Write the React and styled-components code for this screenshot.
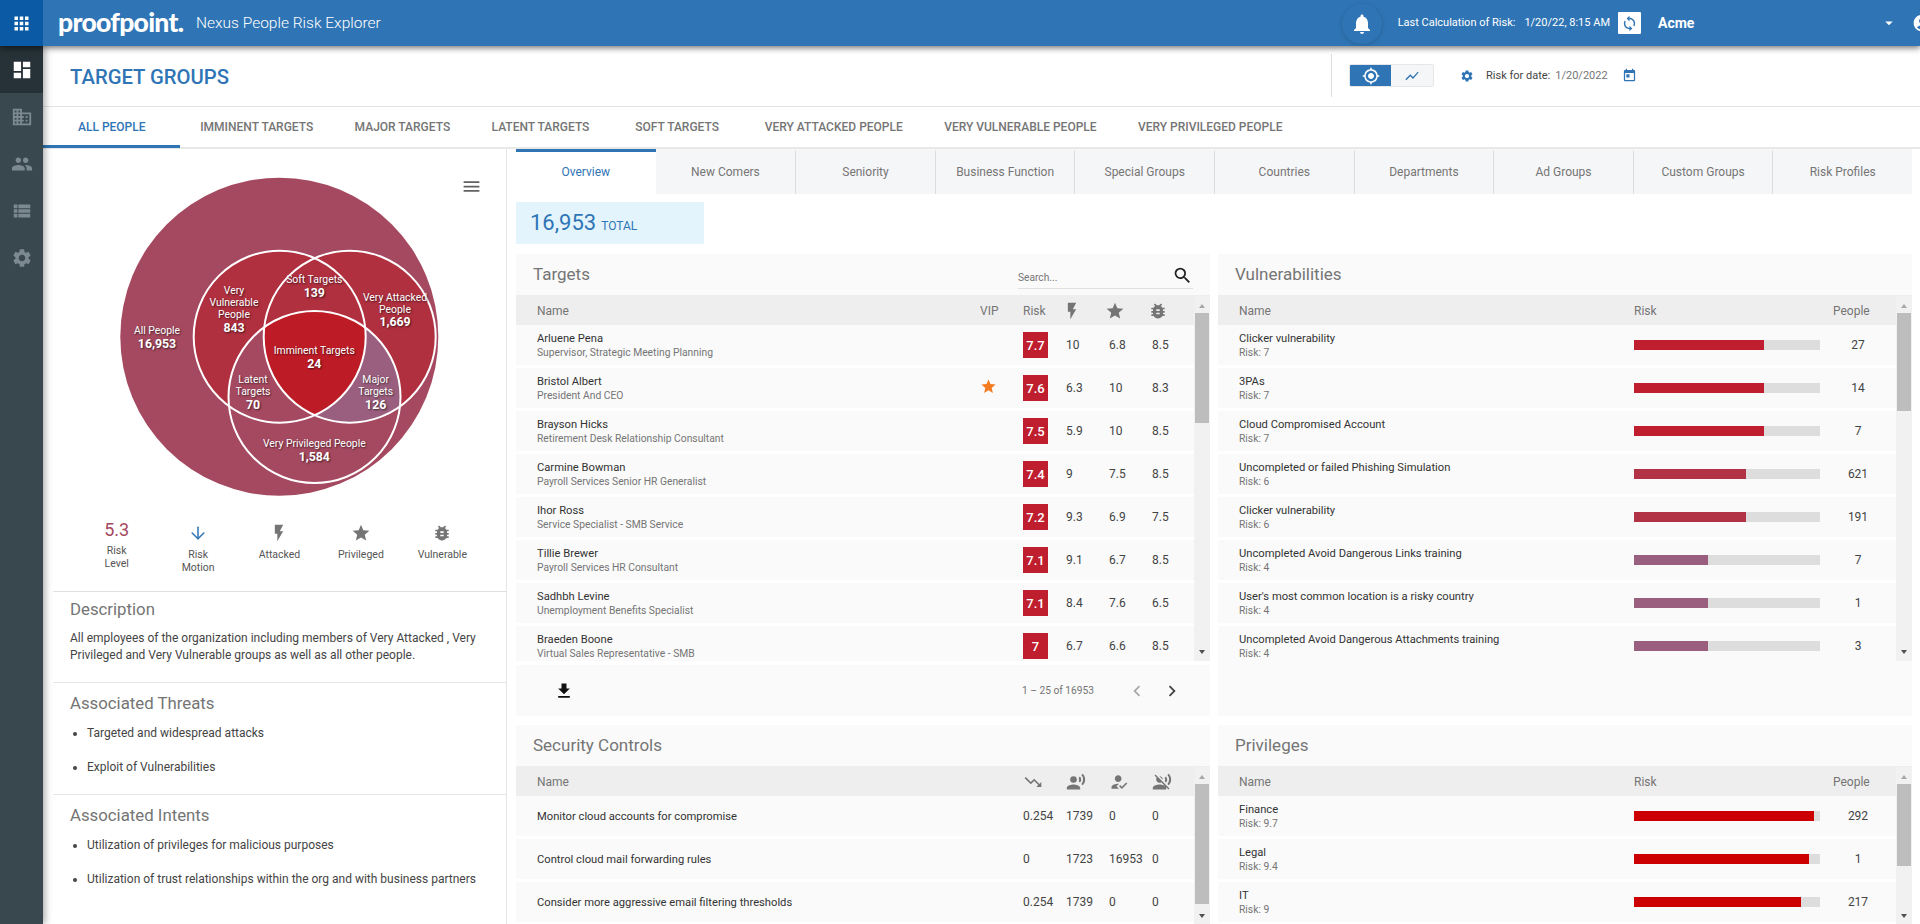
import React from "react";
import styled, { createGlobalStyle } from "styled-components";
import {
  MdApps, MdDashboard, MdDomain, MdPeople, MdViewList, MdSettings, MdNotifications,
  MdArrowDropDown, MdAccountCircle, MdStar, MdBugReport, MdFlashOn, MdFileDownload,
  MdChevronLeft, MdChevronRight, MdSearch, MdMenu, MdToday, MdGpsFixed, MdShowChart,
  MdSync, MdTrendingDown, MdRecordVoiceOver, MdHowToReg, MdVoiceOverOff,
} from "react-icons/md";
import { ArrowDown } from "lucide-react";

const BLUE = "#2f75b5";
const GREY = "#757575";

const Global = createGlobalStyle`
  html, body { margin: 0; height: 100%; overflow: hidden; background: #fff; }
  body { font-family: Roboto, "Liberation Sans", sans-serif; color: #333; }
  * { box-sizing: border-box; }
`;

const Page = styled.div`
  width: 1920px; height: 924px; display: flex; flex-direction: column; overflow: hidden;
`;
const TopBar = styled.header`
  height: 46px; flex: none; display: flex; align-items: center; background: ${BLUE};
  color: #fff; position: relative; z-index: 3; box-shadow: 0 2px 6px rgba(0,0,0,.55); overflow: hidden;
`;
const AppTile = styled.div`
  width: 43px; height: 46px; background: #0a5aa5; display: flex; align-items: center; justify-content: center;
  font-size: 21px; flex: none;
`;
const Logo = styled.div`
  margin-left: 15px; width: 125px; font-family: Lato, sans-serif; font-weight: 900; font-size: 26.5px;
  letter-spacing: -0.7px; line-height: 46px; margin-top: -3px; white-space: nowrap;
`;
const Product = styled.div`
  margin-left: 13px; font-size: 15.5px; font-weight: 300; white-space: nowrap; flex: 1;
`;
const BellWrap = styled.div`
  width: 40px; height: 40px; border-radius: 50%; display: flex; align-items: center; justify-content: center;
  font-size: 24px; box-shadow: 0 1px 5px rgba(0,0,0,.18); margin-top: 2px;
`;
const CalcLabel = styled.span`
  margin-left: 16px; font-size: 11px; white-space: nowrap; margin-top: -2px;
`;
const CalcValue = styled.span`
  margin-left: 9px; font-size: 11px; white-space: nowrap; margin-top: -2px;
`;
const RefreshBtn = styled.button`
  margin-left: 8px; width: 23px; height: 22px; padding: 0; border: 0; border-radius: 1px; background: #fff;
  color: ${BLUE}; display: flex; align-items: center; justify-content: center; font-size: 17px;
`;
const Account = styled.div`
  margin-left: 17px; width: 222px; font-size: 14px; font-weight: 700;
`;
const Caret = styled.div`
  width: 18px; display: flex; font-size: 18px; justify-content: center;
`;
const Avatar = styled.div`
  margin-left: 14px; width: 8px; overflow: hidden; display: flex; font-size: 20px; flex: none;
  svg { flex: none; }
`;

const Body = styled.div`
  flex: 1; display: flex; min-height: 0;
`;
const Rail = styled.nav`
  width: 43px; flex: none; background: #39474f; position: relative; z-index: 2;
  box-shadow: 2px 0 7px rgba(0,0,0,.35);
`;
const RailItem = styled.div`
  height: 47px; display: flex; align-items: center; justify-content: center; font-size: 22px;
  background: ${(p) => (p.$active ? "#263238" : "transparent")};
  color: ${(p) => (p.$active ? "#fff" : "#7d8990")};
`;
const Main = styled.main`
  flex: 1; min-width: 0; display: flex; flex-direction: column;
`;
const PageHead = styled.div`
  height: 61px; flex: none; display: grid; grid-template-columns: 1288px 1fr; align-items: center;
  border-bottom: 1px solid #e3e3e3; padding-bottom: 1px;
`;
const PageTitle = styled.h1`
  margin: 3px 0 0 27px; font-size: 20.3px; font-weight: 500; color: ${BLUE}; line-height: 1;
`;
const Tools = styled.div`
  height: 43px; border-left: 1px solid #ddd; padding-left: 17px; display: flex; align-items: center;
`;
const Toggle = styled.div`
  display: flex; width: 85px; height: 23px; border: 1px solid #e4e6e9; border-radius: 2px; overflow: hidden;
`;
const ToggleBtn = styled.div`
  flex: ${(p) => (p.$active ? "0 0 41px" : "1")}; display: flex; align-items: center; justify-content: center;
  background: ${(p) => (p.$active ? BLUE : "#f5f6f8")}; color: ${(p) => (p.$active ? "#fff" : BLUE)};
  font-size: ${(p) => (p.$active ? "18px" : "16px")};
`;
const ToolGear = styled.span`
  margin-left: 26px; display: flex; color: ${BLUE}; font-size: 14px;
`;
const DateLabel = styled.span`
  margin-left: 12px; font-size: 11px; color: #444;
`;
const DateValue = styled.span`
  margin-left: 5px; font-size: 11px; color: ${GREY};
`;
const DateIcon = styled.span`
  margin-left: 14px; display: flex; color: ${BLUE}; font-size: 15px;
`;
const TabsBar = styled.div`
  height: 42px; flex: none; display: flex; border-bottom: 2px solid #e8e8e8;
`;
const Tab = styled.div`
  height: 41px; margin-bottom: -1px; display: flex; align-items: center; justify-content: center; white-space: nowrap;
  font-size: 12px; font-weight: 500; padding: ${(p) => (p.$active ? "2px 34px 0 35px" : "2px 20.7px 0")};
  min-width: 134px;
  color: ${(p) => (p.$active ? BLUE : GREY)};
  border-bottom: 3px solid ${(p) => (p.$active ? BLUE : "transparent")};
`;
const Content = styled.div`
  flex: 1; min-height: 0; display: flex;
`;
const LeftPanel = styled.aside`
  width: 454px; margin-left: 10px; flex: none; border-right: 1px solid #e6e6e6; position: relative;
  display: flex; flex-direction: column;
`;
const ChartMenu = styled.div`
  position: absolute; top: 27px; left: 408px; display: flex; font-size: 21px; color: #616161;
`;
const VennSvg = styled.svg`
  display: block; flex: none;
`;
const VennText = styled.text`
  font-family: Roboto, sans-serif; fill: #fff; text-anchor: middle; dominant-baseline: central;
  font-size: ${(p) => (p.$bold ? "12.3px" : "10.4px")}; font-weight: ${(p) => (p.$bold ? 700 : 400)};
  text-shadow: 1px 1px 2px rgba(0,0,0,.6);
`;
const Stats = styled.div`
  height: 77px; flex: none; display: grid; grid-template-columns: repeat(5, 1fr); padding: 6px 23px 0;
  border-bottom: 1px solid #e0e0e0;
`;
const Stat = styled.div`
  display: flex; flex-direction: column; align-items: center; font-size: 10.5px; line-height: 13px;
  color: #555; text-align: center;
`;
const StatValue = styled.div`
  font-size: 18px; line-height: 18px; color: #a54960; margin-bottom: 5px;
`;
const StatIcon = styled.div`
  height: 24px; display: flex; align-items: center; margin-bottom: 3px; font-size: 20px;
  color: ${(p) => (p.$blue ? BLUE : GREY)};
`;
const Section = styled.section`
  padding: ${(p) => p.$top}px 17px 0; height: ${(p) => p.$h}px; flex: none; border-bottom: 1px solid #e6e6e6;
`;
const SectionTitle = styled.h2`
  margin: 0; font-size: 16.8px; font-weight: 400; line-height: 22px; color: ${GREY};
`;
const Desc = styled.p`
  margin: 10px 0 0; font-size: 12px; line-height: 16.6px; color: #444;
`;
const Bullets = styled.ul`
  margin: 11px 0 0; padding: 0 0 0 17px; font-size: 12px; color: #444;
  li { line-height: 16px; margin-bottom: 18px; }
`;
const RightPanel = styled.div`
  flex: 1; min-width: 0; padding: 0 8px 0 9px; display: flex; flex-direction: column; overflow: hidden;
`;
const SubTabs = styled.div`
  height: 45px; flex: none; display: grid; grid-template-columns: repeat(10, 1fr);
`;
const SubTab = styled.div`
  display: flex; align-items: center; justify-content: center; font-size: 12px; white-space: nowrap;
  padding-bottom: 2px;
  background: ${(p) => (p.$active ? "#fff" : "#f5f6f8")};
  color: ${(p) => (p.$active ? BLUE : GREY)};
  border-top: 3px solid ${(p) => (p.$active ? BLUE : "transparent")};
  border-left: ${(p) => (p.$first || p.$active ? "0" : "1px solid #ddd")};
`;
const TotalBox = styled.div`
  margin-top: 8px; width: 188px; height: 42px; flex: none; background: #e3f4fd; color: ${BLUE};
  display: flex; align-items: baseline; gap: 5px; padding: 9px 0 0 14px;
`;
const TotalValue = styled.span`
  font-size: 22px; line-height: 24px;
`;
const TotalLabel = styled.span`
  font-size: 12px;
`;
const CardGrid = styled.div`
  margin-top: 10px; display: grid; grid-template-columns: 694px 694px; grid-template-rows: 462px 300px;
  column-gap: 8px; row-gap: 9px;
`;
const Card = styled.section`
  background: #fafafa; display: flex; flex-direction: column; min-height: 0;
`;
const CardHead = styled.div`
  height: 42px; flex: none; display: flex; align-items: center; padding: 0 17px; border-bottom: 1px solid #eee;
`;
const CardTitle = styled.h3`
  margin: -2px 0 0; font-size: 17px; font-weight: 400; color: ${GREY};
`;
const SearchBox = styled.div`
  margin-left: auto; align-self: flex-end; margin-bottom: 6px; width: 175px; height: 22px; display: flex;
  align-items: center; border-bottom: 1px solid #e0e0e0; font-size: 21px; color: #222;
  svg { margin-top: -5px; flex: none; }
`;
const SearchInput = styled.input`
  flex: 1; min-width: 0; border: 0; outline: 0; background: transparent; font: 10.2px Roboto, sans-serif; padding: 0;
  &::placeholder { color: ${GREY}; opacity: 1; }
`;
const TableWrap = styled.div`
  height: ${(p) => p.$h}px; flex: none; display: flex; overflow: hidden;
`;
const TableArea = styled.div`
  flex: 1; min-width: 0; overflow: hidden;
`;
const RowGrid = styled.div`
  display: grid; padding-left: 21px; align-items: center;
  grid-template-columns: ${(p) => (p.$bars ? "1fr 186px 76px" : "1fr 43px 43px 43px 43px 42px")};
`;
const HeadRow = styled(RowGrid)`
  height: 29px; background: #eee; font-size: 12px; color: ${GREY};
`;
const PeopleHead = styled.span`
  padding-left: 13px;
`;
const HeadIcon = styled.span`
  display: flex; font-size: 20px; color: ${GREY}; margin-left: ${(p) => p.$shift}px;
`;
const DataRow = styled(RowGrid)`
  height: 43px; border-bottom: 3px solid #fff; font-size: 12px; color: #444;
`;
const NameCell = styled.div`
  grid-column: ${(p) => (p.$wide ? "1 / 3" : "auto")};
  min-width: 0;
`;
const Name = styled.div`
  font-size: 11.2px; line-height: 15px; color: #333; white-space: nowrap;
`;
const Sub = styled.div`
  font-size: 10.3px; line-height: 14px; color: ${GREY}; white-space: nowrap;
`;
const Vip = styled.span`
  display: flex; font-size: 17px; color: #f47b20; margin-top: -4px;
`;
const Badge = styled.span`
  width: 25px; height: 26px; background: #be1e2d; color: #fff; font-size: 13px; font-weight: 500;
  display: flex; align-items: center; justify-content: center;
`;
const BarTrack = styled.div`
  width: 186px; height: 10px; background: #ddd;
`;
const BarFill = styled.div`
  height: 100%; background: ${(p) => p.$color};
`;
const PeopleCell = styled.div`
  text-align: center; color: #444;
`;
const Track = styled.div`
  width: 16px; flex: none; background: #f1f1f1; display: flex; flex-direction: column; align-items: center;
`;
const ArrowUp = styled.div`
  margin-top: 8px; width: 0; height: 0; border: 3.5px solid transparent; border-top: 0; border-bottom: 4px solid #a8a8a8;
`;
const Thumb = styled.div`
  margin-top: 5px; width: 14px; height: ${(p) => p.$h}px; background: #bdbdbd; flex: none;
`;
const ArrowDn = styled.div`
  margin-top: auto; margin-bottom: 7px; width: 0; height: 0; border: 3.5px solid transparent; border-bottom: 0;
  border-top: 4px solid #505050;
`;
const CardFoot = styled.div`
  flex: 1; border-top: 4px solid #fff; display: flex; align-items: center; padding: 0 27px 0 38px; font-size: 10.2px; color: ${GREY};
`;
const FootDownload = styled.span`
  display: flex; font-size: 20px; color: #111;
`;
const FootRange = styled.span`
  margin-left: auto;
`;
const FootChev = styled.span`
  display: flex; font-size: 22px; margin-left: ${(p) => p.$gap}px; color: ${(p) => (p.$off ? "#aaa" : "#444")};
`;

const targets = [
  ["Arluene Pena", "Supervisor, Strategic Meeting Planning", false, "7.7", "10", "6.8", "8.5"],
  ["Bristol Albert", "President And CEO", true, "7.6", "6.3", "10", "8.3"],
  ["Brayson Hicks", "Retirement Desk Relationship Consultant", false, "7.5", "5.9", "10", "8.5"],
  ["Carmine Bowman", "Payroll Services Senior HR Generalist", false, "7.4", "9", "7.5", "8.5"],
  ["Ihor Ross", "Service Specialist - SMB Service", false, "7.2", "9.3", "6.9", "7.5"],
  ["Tillie Brewer", "Payroll Services HR Consultant", false, "7.1", "9.1", "6.7", "8.5"],
  ["Sadhbh Levine", "Unemployment Benefits Specialist", false, "7.1", "8.4", "7.6", "6.5"],
  ["Braeden Boone", "Virtual Sales Representative - SMB", false, "7", "6.7", "6.6", "8.5"],
];
const C7 = "#be1e2d", C6 = "#b23346", C4 = "#9a5f7e", C9 = "#cc0000";
const vulns = [
  ["Clicker vulnerability", "7", 70, C7, "27"],
  ["3PAs", "7", 70, C7, "14"],
  ["Cloud Compromised Account", "7", 70, C7, "7"],
  ["Uncompleted or failed Phishing Simulation", "6", 60, C6, "621"],
  ["Clicker vulnerability", "6", 60, C6, "191"],
  ["Uncompleted Avoid Dangerous Links training", "4", 40, C4, "7"],
  ["User's most common location is a risky country", "4", 40, C4, "1"],
  ["Uncompleted Avoid Dangerous Attachments training", "4", 40, C4, "3"],
];
const privileges = [
  ["Finance", "9.7", 97, C9, "292"],
  ["Legal", "9.4", 94, C9, "1"],
  ["IT", "9", 90, C9, "217"],
];
const controls = [
  ["Monitor cloud accounts for compromise", "0.254", "1739", "0", "0"],
  ["Control cloud mail forwarding rules", "0", "1723", "16953", "0"],
  ["Consider more aggressive email filtering thresholds", "0.254", "1739", "0", "0"],
];
const tabs = ["All People", "Imminent Targets", "Major Targets", "Latent Targets", "Soft Targets", "Very Attacked People", "Very Vulnerable People", "Very Privileged People"];
const subTabs = ["Overview", "New Comers", "Seniority", "Business Function", "Special Groups", "Countries", "Departments", "Ad Groups", "Custom Groups", "Risk Profiles"];
const labels = [
  [157, 330.7, "All People"], [157, 343.7, "16,953", 1],
  [234, 290, "Very"], [234, 302, "Vulnerable"], [234, 314.7, "People"], [234, 327.7, "843", 1],
  [314.3, 279.7, "Soft Targets"], [314.3, 292.7, "139", 1],
  [395, 297, "Very Attacked"], [395, 309, "People"], [395, 322, "1,669", 1],
  [314.3, 350, "Imminent Targets"], [314.3, 363.7, "24", 1],
  [253, 379, "Latent"], [253, 391.7, "Targets"], [253, 404.7, "70", 1],
  [375.7, 379, "Major"], [375.7, 391.7, "Targets"], [375.7, 404.7, "126", 1],
  [314.3, 443, "Very Privileged People"], [314.3, 456.7, "1,584", 1],
];

const L = { cx: 279.7, cy: 336.7, r: 86 };
const R = { cx: 349.7, cy: 336.7, r: 86 };
const B = { cx: 314.5, cy: 397, r: 86 };

function Venn() {
  return (
    <VennSvg width="453" height="366" viewBox="53 149 453 366">
      <defs>
        <clipPath id="clipB"><circle {...B} /></clipPath>
        <clipPath id="clipL"><circle {...L} /></clipPath>
      </defs>
      <circle cx="279.3" cy="336.7" r="159" fill="#a54960" />
      <circle {...L} fill="#b03040" />
      <circle {...R} fill="#b03040" />
      <circle {...B} fill="#a54960" />
      <g clipPath="url(#clipB)">
        <circle {...R} fill="#9a5f7e" />
        <circle {...L} fill="#a54960" />
        <g clipPath="url(#clipL)">
          <circle {...R} fill="#bd1c27" />
        </g>
      </g>
      <circle {...L} fill="none" stroke="#fff" strokeWidth="2" />
      <circle {...R} fill="none" stroke="#fff" strokeWidth="2" />
      <circle {...B} fill="none" stroke="#fff" strokeWidth="2" />
      {labels.map(([x, y, t, b]) => (
        <VennText key={`${x}-${y}`} x={x} y={y} $bold={!!b}>{t}</VennText>
      ))}
    </VennSvg>
  );
}

function Scroll({ h }) {
  return (
    <Track>
      <ArrowUp />
      <Thumb $h={h} />
      <ArrowDn />
    </Track>
  );
}

function BarTable({ rows, thumb, height }) {
  return (
    <TableWrap $h={height}>
      <TableArea>
        <HeadRow $bars>
          <span>Name</span>
          <span>Risk</span>
          <PeopleHead>People</PeopleHead>
        </HeadRow>
        {rows.map(([n, risk, pct, color, people], i) => (
          <DataRow $bars key={i}>
            <NameCell>
              <Name>{n}</Name>
              <Sub>Risk: {risk}</Sub>
            </NameCell>
            <BarTrack><BarFill $color={color} style={{ width: `${pct}%` }} /></BarTrack>
            <PeopleCell>{people}</PeopleCell>
          </DataRow>
        ))}
      </TableArea>
      <Scroll h={thumb} />
    </TableWrap>
  );
}

export default function App() {
  return (
    <Page>
      <Global />
      <TopBar>
        <AppTile><MdApps /></AppTile>
        <Logo>proofpoint.</Logo>
        <Product>Nexus People Risk Explorer</Product>
        <BellWrap><MdNotifications /></BellWrap>
        <CalcLabel>Last Calculation of Risk:</CalcLabel>
        <CalcValue>1/20/22, 8:15 AM</CalcValue>
        <RefreshBtn><MdSync /></RefreshBtn>
        <Account>Acme</Account>
        <Caret><MdArrowDropDown /></Caret>
        <Avatar><MdAccountCircle /></Avatar>
      </TopBar>
      <Body>
        <Rail>
          <RailItem $active><MdDashboard /></RailItem>
          <RailItem><MdDomain /></RailItem>
          <RailItem><MdPeople /></RailItem>
          <RailItem><MdViewList /></RailItem>
          <RailItem><MdSettings /></RailItem>
        </Rail>
        <Main>
          <PageHead>
            <PageTitle>TARGET GROUPS</PageTitle>
            <Tools>
              <Toggle>
                <ToggleBtn $active><MdGpsFixed /></ToggleBtn>
                <ToggleBtn><MdShowChart /></ToggleBtn>
              </Toggle>
              <ToolGear><MdSettings /></ToolGear>
              <DateLabel>Risk for date:</DateLabel>
              <DateValue>1/20/2022</DateValue>
              <DateIcon><MdToday /></DateIcon>
            </Tools>
          </PageHead>
          <TabsBar>
            {tabs.map((t, i) => <Tab key={t} $active={i === 0}>{t.toUpperCase()}</Tab>)}
          </TabsBar>
          <Content>
            <LeftPanel>
              <ChartMenu><MdMenu /></ChartMenu>
              <Venn />
              <Stats>
                <Stat><StatValue>5.3</StatValue>Risk<br />Level</Stat>
                <Stat><StatIcon $blue><ArrowDown size={20} strokeWidth={1.8} /></StatIcon>Risk<br />Motion</Stat>
                <Stat><StatIcon><MdFlashOn /></StatIcon>Attacked</Stat>
                <Stat><StatIcon><MdStar /></StatIcon>Privileged</Stat>
                <Stat><StatIcon><MdBugReport /></StatIcon>Vulnerable</Stat>
              </Stats>
              <Section $top={6} $h={91}>
                <SectionTitle>Description</SectionTitle>
                <Desc>All employees of the organization including members of Very Attacked , Very Privileged and Very Vulnerable groups as well as all other people.</Desc>
              </Section>
              <Section $top={9} $h={112}>
                <SectionTitle>Associated Threats</SectionTitle>
                <Bullets>
                  <li>Targeted and widespread attacks</li>
                  <li>Exploit of Vulnerabilities</li>
                </Bullets>
              </Section>
              <Section $top={9} $h={130}>
                <SectionTitle>Associated Intents</SectionTitle>
                <Bullets>
                  <li>Utilization of privileges for malicious purposes</li>
                  <li>Utilization of trust relationships within the org and with business partners</li>
                </Bullets>
              </Section>
            </LeftPanel>
            <RightPanel>
              <SubTabs>
                {subTabs.map((t, i) => <SubTab key={t} $active={i === 0} $first={i === 1}>{t}</SubTab>)}
              </SubTabs>
              <TotalBox>
                <TotalValue>16,953</TotalValue>
                <TotalLabel>TOTAL</TotalLabel>
              </TotalBox>
              <CardGrid>
                <Card>
                  <CardHead>
                    <CardTitle>Targets</CardTitle>
                    <SearchBox>
                      <SearchInput placeholder="Search..." readOnly />
                      <MdSearch />
                    </SearchBox>
                  </CardHead>
                  <TableWrap $h={365}>
                    <TableArea>
                      <HeadRow>
                        <span>Name</span>
                        <span>VIP</span>
                        <span>Risk</span>
                        <HeadIcon $shift={-4}><MdFlashOn /></HeadIcon>
                        <HeadIcon $shift={-4}><MdStar /></HeadIcon>
                        <HeadIcon $shift={-4}><MdBugReport /></HeadIcon>
                      </HeadRow>
                      {targets.map(([n, s, vip, r, a, p, v]) => (
                        <DataRow key={n}>
                          <NameCell>
                            <Name>{n}</Name>
                            <Sub>{s}</Sub>
                          </NameCell>
                          <span>{vip && <Vip><MdStar /></Vip>}</span>
                          <Badge>{r}</Badge>
                          <span>{a}</span>
                          <span>{p}</span>
                          <span>{v}</span>
                        </DataRow>
                      ))}
                    </TableArea>
                    <Scroll h={110} />
                  </TableWrap>
                  <CardFoot>
                    <FootDownload><MdFileDownload /></FootDownload>
                    <FootRange>1 – 25 of 16953</FootRange>
                    <FootChev $gap={32} $off><MdChevronLeft /></FootChev>
                    <FootChev $gap={13}><MdChevronRight /></FootChev>
                  </CardFoot>
                </Card>
                <Card>
                  <CardHead><CardTitle>Vulnerabilities</CardTitle></CardHead>
                  <BarTable rows={vulns} thumb={98} height={365} />
                </Card>
                <Card>
                  <CardHead><CardTitle>Security Controls</CardTitle></CardHead>
                  <TableWrap $h={158}>
                    <TableArea>
                      <HeadRow>
                        <span>Name</span>
                        <span />
                        <HeadIcon $shift={0}><MdTrendingDown /></HeadIcon>
                        <HeadIcon $shift={0}><MdRecordVoiceOver /></HeadIcon>
                        <HeadIcon $shift={0}><MdHowToReg /></HeadIcon>
                        <HeadIcon $shift={0}><MdVoiceOverOff /></HeadIcon>
                      </HeadRow>
                      {controls.map(([n, a, b, c, d]) => (
                        <DataRow key={n}>
                          <NameCell $wide><Name>{n}</Name></NameCell>
                          <span>{a}</span>
                          <span>{b}</span>
                          <span>{c}</span>
                          <span>{d}</span>
                        </DataRow>
                      ))}
                    </TableArea>
                    <Scroll h={120} />
                  </TableWrap>
                </Card>
                <Card>
                  <CardHead><CardTitle>Privileges</CardTitle></CardHead>
                  <BarTable rows={privileges} thumb={82} height={158} />
                </Card>
              </CardGrid>
            </RightPanel>
          </Content>
        </Main>
      </Body>
    </Page>
  );
}
